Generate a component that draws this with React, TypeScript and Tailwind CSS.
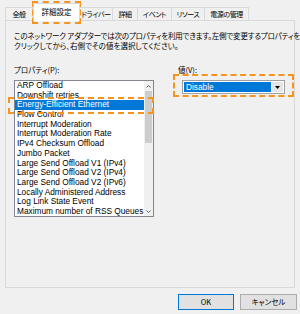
const jp = "font-['Noto_Sans_CJK_JP',sans-serif] [font-feature-settings:'palt']";

const tabs = ["全般", "詳細設定", "ドライバー", "詳細", "イベント", "リソース", "電源の管理"];
const tabWidths = [28, 47, 33, 25, 34, 33, 44];

const items = [
  "ARP Offload",
  "Downshift retries",
  "Energy-Efficient Ethernet",
  "Flow Control",
  "Interrupt Moderation",
  "Interrupt Moderation Rate",
  "IPv4 Checksum Offload",
  "Jumbo Packet",
  "Large Send Offload V1 (IPv4)",
  "Large Send Offload V2 (IPv4)",
  "Large Send Offload V2 (IPv6)",
  "Locally Administered Address",
  "Log Link State Event",
  "Maximum number of RSS Queues",
];

export default function App() {
  return (
    <div className="relative h-[314px] w-[300px] overflow-hidden bg-[#f0f0f0] text-black">
      {/* tab strip */}
      <div className={`flex h-[20px] items-end pl-[5px] ${jp}`}>
        {tabs.map((t, i) => {
          const sel = i === 1;
          return (
            <div
              key={t}
              style={{ width: tabWidths[i] }}
              className={
                sel
                  ? "relative z-10 -mb-px flex h-[18px] shrink-0 items-center justify-center whitespace-nowrap border border-b-0 border-[#d9d9d9] bg-white pb-[2px] text-[7.5px] leading-[10px]"
                  : "flex h-[13px] shrink-0 items-center justify-center whitespace-nowrap border border-b-0 border-l-0 border-[#d9d9d9] text-[7px] leading-[10px] tracking-[-0.4px] first:border-l"
              }
            >
              {t}
            </div>
          );
        })}
      </div>

      {/* tab page */}
      <div className="mx-[5px] h-[268px] border border-[#d9d9d9] bg-[#f0f0f0] pl-[8px] pt-[10px]">
        <div className={`text-[7.5px] leading-[10px] ${jp}`}>
          <p className="h-[10px] whitespace-nowrap tracking-[-0.2px]">
            このネットワーク アダプターでは次のプロパティを利用できます。左側で変更するプロパティを
          </p>
          <p className="h-[10px] whitespace-nowrap">クリックしてから、右側でその値を選択してください。</p>
        </div>

        <div className="mt-[14px] flex">
          <div className="w-[140px]">
            <p className={`h-[10px] text-[7.5px] leading-[10px] ${jp}`}>プロパティ(P):</p>
            <div className="mt-[5px] flex h-[137px] border border-[#828790] bg-white">
              <ul className="flex-1 font-['Liberation_Sans',sans-serif] text-[8.3px]">
                {items.map((it, i) => (
                  <li
                    key={it}
                    className={
                      i === 2
                        ? "h-[9.7px] whitespace-nowrap bg-[#0078d7] pl-[2px] leading-[9.7px] text-white"
                        : "h-[9.7px] whitespace-nowrap pl-[2px] leading-[9.7px]"
                    }
                  >
                    {it}
                  </li>
                ))}
              </ul>
              <div className="flex w-[9px] flex-col bg-[#f0f0f0]">
                <div className="flex h-[10px] items-center justify-center text-[#606060]">
                  <svg width="5" height="3" viewBox="0 0 5 3">
                    <path d="M0.5 2.5 L2.5 0.5 L4.5 2.5" fill="none" stroke="currentColor" strokeWidth="1" />
                  </svg>
                </div>
                <div className="mx-[1px] h-[52px] bg-[#cdcdcd]" />
                <div className="flex-1" />
                <div className="flex h-[10px] items-center justify-center text-[#606060]">
                  <svg width="5" height="3" viewBox="0 0 5 3">
                    <path d="M0.5 0.5 L2.5 2.5 L4.5 0.5" fill="none" stroke="currentColor" strokeWidth="1" />
                  </svg>
                </div>
              </div>
            </div>
          </div>

          <div className="ml-[24px]">
            <p className={`h-[10px] text-[7.5px] leading-[10px] ${jp}`}>値(V):</p>
            <div className="ml-[4px] mt-[5px] flex h-[14px] w-[103px] border border-[#a0a0a0] bg-white p-[1px]">
              <div className="flex flex-1 items-center bg-[#0078d7] pl-[2px] font-['Liberation_Sans',sans-serif] text-[8.3px] leading-[10px] text-white">
                Disable
              </div>
              <div className="ml-[1px] flex w-[11px] items-center justify-center bg-[#e5e5e5]">
                <svg width="5" height="3" viewBox="0 0 5 3">
                  <path d="M0 0 H5 L2.5 3 Z" fill="#000" />
                </svg>
              </div>
            </div>
          </div>
        </div>
      </div>

      {/* buttons */}
      <div className={`mt-[6px] flex justify-end gap-[6px] pr-[3px] text-[7.5px] leading-[10px] ${jp}`}>
        <button className="flex h-[16px] w-[56px] items-center justify-center border border-[#0078d7] bg-[#e1e1e1]">
          OK
        </button>
        <button className="flex h-[16px] w-[57px] items-center justify-center border border-[#adadad] bg-[#e1e1e1]">
          キャンセル
        </button>
      </div>

      {/* highlight marks */}
      <div className="pointer-events-none absolute left-[32px] top-[1px] h-[23px] w-[49px] border-2 border-dashed border-[#f7941d]" />
      <div className="pointer-events-none absolute left-[8px] top-[97px] h-[17px] w-[146px] border-2 border-dashed border-[#f7941d]" />
      <div className="pointer-events-none absolute left-[173px] top-[74px] h-[23px] w-[121px] border-2 border-dashed border-[#f7941d]" />
    </div>
  );
}
